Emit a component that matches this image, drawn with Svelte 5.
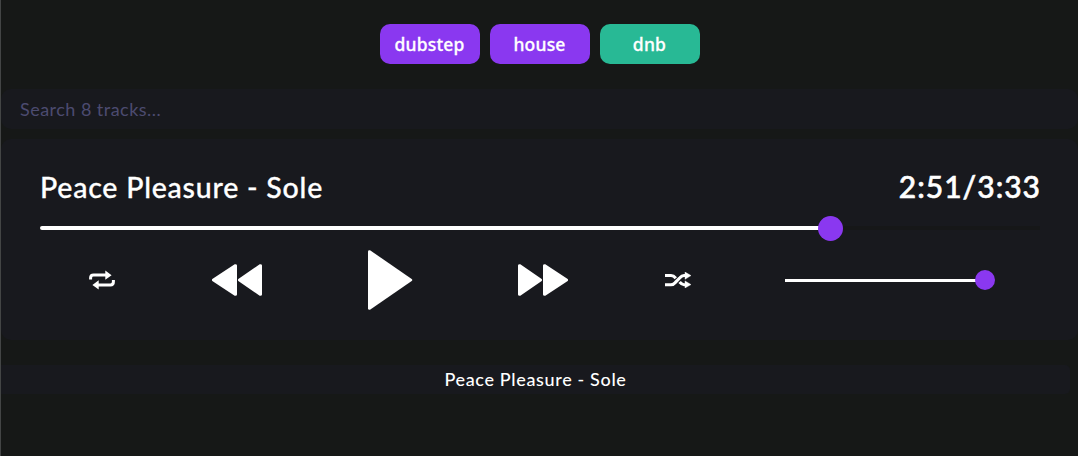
<script>
  const genres = [
    { name: 'dubstep', active: false },
    { name: 'house', active: false },
    { name: 'dnb', active: true }
  ];
  const track = 'Peace Pleasure - Sole';
  let progress = $state(79);
</script>

<main>
  <nav>
    {#each genres as g}
      <button class="genre" class:active={g.active}>{g.name}</button>
    {/each}
  </nav>

  <input class="search" type="text" placeholder="Search 8 tracks..." />

  <section class="player">
    <header>
      <h1>{track}</h1>
      <time>2:51/3:33</time>
    </header>
    <div class="seek">
      <div class="fill" style="width: {progress}%"></div>
      <div class="thumb"></div>
    </div>
    <div class="controls">
      <button aria-label="Repeat">
        <svg width="26" height="20" viewBox="0 0 26 20">
          <path d="M1.6 9.5V7.8Q1.6 5 4.6 5H17M24.4 10V11.7Q24.4 15 21.4 15H9" fill="none" stroke="#fff" stroke-width="3" />
          <path d="M16.3 .5L22.6 5.2L16.3 9.8ZM9.7 10.3L3.4 15L9.7 19.6Z" fill="#fff" />
        </svg>
      </button>
      <button aria-label="Previous">
        <svg width="50" height="32" viewBox="0 0 50 32">
          <path d="M.3 15L22.7.3Q25 0 25 1.5V30.5Q25 32 22.7 31.7L.3 17Q-.4 16 .3 15ZM26.3 15L47.7.3Q50 0 50 1.5V30.5Q50 32 47.7 31.7L26.3 17Q25.6 16 26.3 15Z" fill="#fff" />
        </svg>
      </button>
      <button aria-label="Play">
        <svg width="45" height="60" viewBox="0 0 45 60">
          <path d="M0 1.2Q0 0 2 .2L43.7 29Q44.9 30 43.7 31L2 59.8Q0 60 0 58.8Z" fill="#fff" />
        </svg>
      </button>
      <button aria-label="Next">
        <svg width="50" height="32" viewBox="0 0 50 32">
          <path d="M0 1.5Q0 0 2.3.3L23.7 15Q24.4 16 23.7 17L2.3 31.7Q0 32 0 30.5ZM25 1.5Q25 0 27.3.3L49.7 15Q50.4 16 49.7 17L27.3 31.7Q25 32 25 30.5Z" fill="#fff" />
        </svg>
      </button>
      <button aria-label="Shuffle">
        <svg width="26" height="16" viewBox="0 0 26 16">
          <path d="M0 3.5H6Q8.6 3.5 10.8 6.2M14.6 10.1Q16.8 12.7 19 12.7H21M0 12.7H6Q8.5 12.7 10.4 10.4L14.9 5.7Q16.8 3.5 19 3.5H21" fill="none" stroke="#fff" stroke-width="3.1" />
          <path d="M20 0L26 3.6L20 7.3ZM20 8.9L26 12.6L20 16Z" fill="#fff" stroke="#fff" stroke-width=".4" />
        </svg>
      </button>
      <div class="volume"><div class="knob"></div></div>
    </div>
  </section>

  <ul>
    <li><span>{track}</span></li>
  </ul>
</main>

<style>
  :global(body) { background: #161817; }
  main {
    box-sizing: border-box;
    height: 456px;
    padding-top: 24px;
    border-left: 1px solid #434545;
    overflow: hidden;
    color: #fff;
    font-family: Lato, sans-serif;
  }
  button { border: 0; padding: 0; background: none; color: inherit; }
  nav { display: flex; justify-content: center; gap: 10px; height: 40px; }
  .genre {
    width: 100px;
    padding-bottom: 1px;
    border-radius: 10px;
    background: #8a38f0;
    font: 500 17.5px/38px "Noto Sans", sans-serif;
    letter-spacing: .2px;
    -webkit-text-stroke: .3px #fff;
  }
  .genre.active { background: #28b995; }
  .search {
    display: block;
    box-sizing: border-box;
    width: 100%;
    height: 40px;
    margin: 25px 0 10px;
    padding: 0 19px;
    border: 0;
    border-radius: 10px;
    background: #18191e;
    font: 18px Lato, sans-serif;
    letter-spacing: .47px;
  }
  .search::placeholder { color: #4c4b70; opacity: 1; }
  .player {
    box-sizing: border-box;
    height: 201px;
    padding: 29px 38px 0 39px;
    border-radius: 10px;
    background: #18191e;
  }
  header { display: flex; justify-content: space-between; height: 40px; }
  h1 {
    margin: 0;
    font-size: 28.5px;
    line-height: 38px;
    font-weight: 500;
    letter-spacing: .78px;
    white-space: nowrap;
    -webkit-text-stroke: .3px #fff;
  }
  time {
    margin-right: -1px;
    font-size: 30px;
    line-height: 37px;
    font-weight: 500;
    letter-spacing: 1px;
    white-space: nowrap;
    -webkit-text-stroke: .6px #fff;
  }
  .seek { display: flex; align-items: center; height: 40px; width: 1000px; border-radius: 2px; background: linear-gradient(#161718, #161718) center / 100% 4px no-repeat; }
  .fill { box-sizing: border-box; height: 4px; background: #fff; border-radius: 2px; }
  .thumb { width: 25px; height: 25px; margin-left: -12px; border-radius: 50%; background: #8a38f0; }
  .controls {
    display: grid;
    grid-template-columns: 124px 146px 160px 146px 124px 210px;
    align-items: center;
    height: 64px;
  }
  .controls button { display: grid; place-items: center; }
  svg { display: block; }
  .volume {
    display: flex;
    align-items: center;
    justify-content: flex-end;
    width: 210px;
    height: 20px;
    margin-left: 45px;
    background: linear-gradient(#fff, #fff) 0 9px / 200px 3px no-repeat;
  }
  .knob { width: 20px; height: 20px; border-radius: 50%; background: #8a38f0; }
  ul { list-style: none; margin: 25px 8px 0 0; padding: 0; }
  li {
    height: 29px;
    border-radius: 0 5px 5px 0;
    background: #18191e;
    text-align: center;
    font-size: 18px;
    line-height: 28px;
    font-weight: 500;
    letter-spacing: .65px;
  }
</style>
